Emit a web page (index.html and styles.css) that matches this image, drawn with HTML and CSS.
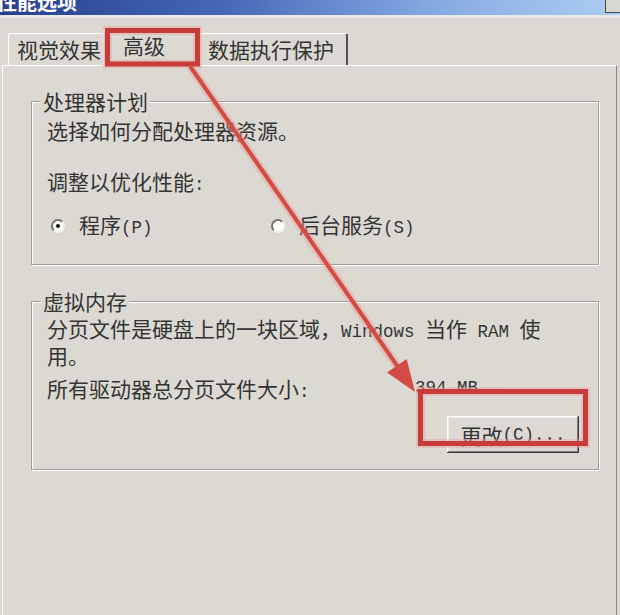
FILE: index.html
```html
<!DOCTYPE html>
<html lang="zh-CN">
<head>
<meta charset="utf-8">
<title>性能选项</title>
<link rel="stylesheet" href="styles.css">
</head>
<body>
<div class="window">
  <div class="titlebar">
    <span class="title">性能选项</span>
    <span class="ctl"></span>
  </div>
  <div class="tabs">
    <div class="tab first">视觉效果</div>
    <div class="tab active">高级</div>
    <div class="tab last">数据执行保护</div>
  </div>
  <div class="panel">
    <fieldset class="group cpu">
      <legend>处理器计划</legend>
      <p class="line">选择如何分配处理器资源。</p>
      <p class="line adjust">调整以优化性能<span class="en">:</span></p>
      <div class="radios">
        <div class="opt"><span class="radio checked"></span><span>程序<span class="en">(P)</span></span></div>
        <div class="opt"><span class="radio"></span><span>后台服务<span class="en">(S)</span></span></div>
      </div>
    </fieldset>
    <fieldset class="group vm">
      <legend>虚拟内存</legend>
      <p class="line desc">分页文件是硬盘上的一块区域，<span class="en">Windows </span>当作<span class="en"> RAM </span>使<br>用。</p>
      <div class="total">
        <span class="total-label">所有驱动器总分页文件大小<span class="en">:</span></span>
        <span class="en">394 MB</span>
      </div>
      <div class="actions">
        <button class="btn" type="button">更改<span class="en">(C)...</span></button>
      </div>
    </fieldset>
  </div>
  <svg class="annot" width="620" height="615" viewBox="0 0 620 615">
    <g fill="none" stroke="#e9a19d" stroke-width="9" opacity="0.45">
      <rect x="107.5" y="30.5" width="90" height="33.5"/>
      <rect x="420.5" y="391.5" width="165" height="52"/>
      <line x1="190" y1="66" x2="397" y2="366"/>
    </g>
    <g fill="none" stroke="#c73c3a" stroke-width="5">
      <rect x="107.5" y="30.5" width="90" height="33.5"/>
      <rect x="420.5" y="391.5" width="165" height="52"/>
    </g>
    <line x1="190" y1="66" x2="398" y2="367" stroke="#d44b46" stroke-width="4"/>
    <polygon points="415,392 387,372.5 406.7,359" fill="#d44b46"/>
  </svg>
</div>
</body>
</html>
```
FILE: styles.css
```css
body {
  margin: 0;
  background: #dcd9d3;
  font-family: "Noto Sans CJK SC", "Noto Sans", sans-serif;
  font-size: 21px;
  color: #343434;
}

.window {
  position: relative;
  width: 620px;
  height: 615px;
  overflow: hidden;
  display: flex;
  flex-direction: column;
}

.titlebar {
  flex: none;
  height: 15px;
  display: flex;
  align-items: flex-end;
  overflow: hidden;
  background: linear-gradient(90deg, #263f8c 0%, #4466b6 35%, #86a9e2 70%, #aecdf2 100%);
}

.title {
  color: #fff;
  font-weight: 700;
  font-size: 20px;
  line-height: 20px;
  padding-bottom: 3px;
  margin-left: -3px;
  white-space: nowrap;
}

.ctl {
  margin-left: auto;
  align-self: flex-start;
  width: 14px;
  height: 12px;
  background: #d9d7d1;
  border-left: 1px solid #4a4a4a;
  border-bottom: 1px solid #4a4a4a;
}

.tabs {
  flex: none;
  box-sizing: border-box;
  height: 50px;
  border-top: 3px solid #eae8e4;
  display: flex;
  align-items: flex-end;
  padding-left: 8px;
}

.tab {
  box-sizing: border-box;
  height: 32px;
  padding-top: 4px;
  line-height: 22px;
  border-top: 1px solid #fff;
  border-left: 1px solid #fff;
  border-radius: 3px 3px 0 0;
  white-space: nowrap;
}

.tab.first {
  width: 95px;
  padding-left: 8px;
}

.tab.active {
  position: relative;
  z-index: 1;
  width: 97px;
  height: 37px;
  padding-left: 19px;
  margin-bottom: -1px;
  border-right: 1px solid #6d6b67;
  background: #dcd9d3;
}

.tab.last {
  width: 148px;
  padding-left: 8px;
  border-left: none;
  border-right: 2px solid #4e4e4e;
}

.panel {
  flex: 1;
  margin: 0 3px 0 2px;
  border-top: 1px solid #fff;
  border-left: 1px solid #fff;
  border-right: 1px solid #8c8a86;
  padding: 24px 17px 0 28px;
}

.group {
  margin: 0;
  min-width: 0;
  padding: 7px 15px 25px 15px;
  border: 1px solid #a19e98;
  box-shadow: inset 1px 1px 0 #fff, 1px 1px 0 #fff;
}

.group legend {
  padding: 0 2px;
  margin-left: -6px;
  line-height: 22px;
  background: #dcd9d3;
}

.line {
  margin: 0;
  line-height: 22px;
  white-space: nowrap;
}

.en {
  font-family: "Liberation Mono", monospace;
  font-size: 17.5px;
}

.adjust {
  margin-top: 29px;
}

.radios {
  display: flex;
  margin-top: 17px;
  padding-left: 4px;
  line-height: 22px;
}

.opt {
  display: flex;
  align-items: center;
  gap: 14px;
  width: 220px;
  white-space: nowrap;
}

.radio {
  box-sizing: border-box;
  width: 14px;
  height: 14px;
  border-radius: 50%;
  border: 2px solid;
  border-color: #767470 #f5f4f1 #f5f4f1 #767470;
  background: #fff;
  display: flex;
  align-items: center;
  justify-content: center;
}

.radio.checked::after {
  content: "";
  width: 4px;
  height: 4px;
  border-radius: 50%;
  background: #111;
}

.vm {
  margin-top: 25px;
  padding-top: 5px;
  padding-bottom: 16px;
}

.desc {
  line-height: 23px;
}

.total {
  display: flex;
  margin-top: 10px;
  line-height: 22px;
  white-space: nowrap;
}

.total-label {
  width: 368px;
}

.actions {
  display: flex;
  justify-content: flex-end;
  margin-top: 13px;
  padding-right: 4px;
}

.btn {
  box-sizing: border-box;
  width: 132px;
  height: 37px;
  padding: 0;
  border: none;
  font: inherit;
  color: #343434;
  background: #dcd9d3;
  line-height: 22px;
  display: flex;
  align-items: center;
  justify-content: center;
  box-shadow: inset -1px -1px 0 #3c3c3c, inset 1px 1px 0 #fff, inset -2px -2px 0 #807e7a, inset 2px 2px 0 #eeede9;
}

.annot {
  position: absolute;
  z-index: 5;
  top: 0;
  left: 0;
  pointer-events: none;
}
```
